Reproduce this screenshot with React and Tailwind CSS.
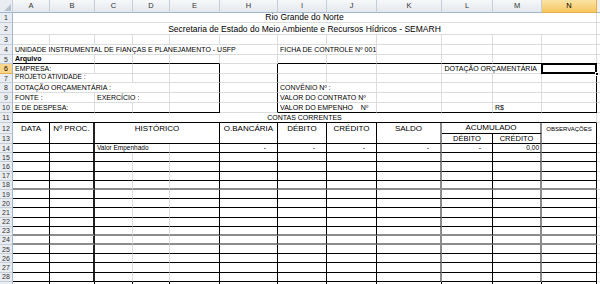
import React from "react";

// larguras das colunas (px) como na planilha reduzida
const W = {
  A: "w-[37px]", B: "w-[45px]", C: "w-[38px]", D: "w-[37px]", E: "w-[50px]",
  H: "w-[58px]", I: "w-[49px]", J: "w-[50px]", K: "w-[65px]", L: "w-[51px]",
  M: "w-[49px]", N: "w-[55px]",
};
const COLS = ["A", "B", "C", "D", "E", "H", "I", "J", "K", "L", "M", "N"];

// bordas: grade clara, preta e cinza grossa
const gr = "border-r border-r-[#dadcdd]";
const gb = "border-b border-b-[#dadcdd]";
const kr = "border-r border-r-black";
const kb = "border-b border-b-black";
const xr = "border-r-2 border-r-[#8c8c8c]";
const xb = "border-b-2 border-b-[#8c8c8c]";

function Cell({ w, r = gr, b = gb, className = "", children }) {
  return (
    <div className={`${w} ${r} ${b} shrink-0 h-full flex items-end overflow-hidden whitespace-nowrap ${className}`}>
      {children}
    </div>
  );
}

function RowHead({ n, sel }) {
  return (
    <div
      className={[
        "w-[13px] shrink-0 h-full flex items-center justify-center text-[7px] border-r border-r-[#9eb6ce] border-b",
        sel ? "bg-[#f8d58a] border-b-[#e8ae4c] text-black" : "bg-[#e9edf2] border-b-[#c5cdd8] text-[#333]",
      ].join(" ")}
    >
      {n}
    </div>
  );
}

function Row({ n, h, sel, children }) {
  return (
    <div className={`flex ${h}`}>
      <RowHead n={n} sel={sel} />
      {children}
      <div className="flex-1 h-full border-b border-b-[#dadcdd]" />
    </div>
  );
}

function ColHeader() {
  return (
    <div className="flex h-[13px]">
      <div className="w-[13px] shrink-0 h-full relative bg-[#e9edf2] border-r border-r-[#c5cdd8] border-b border-b-[#9eb6ce]">
        <div className="absolute right-[1px] bottom-[1px] w-0 h-0 border-l-[7px] border-l-transparent border-b-[7px] border-b-[#b8c0ca]" />
      </div>
      {COLS.map((c) => (
        <div
          key={c}
          className={[
            W[c],
            "shrink-0 h-full flex items-center justify-center text-[7.5px] border-r border-b",
            c === "N"
              ? "bg-linear-to-b from-[#fbe3a4] to-[#f6c75e] border-r-[#e9ad4c] border-b-[#e9ad4c] text-black"
              : "bg-linear-to-b from-[#f6f8fa] to-[#e4e8ed] border-r-[#c5cdd8] border-b-[#9eb6ce] text-[#333]",
          ].join(" ")}
        >
          {c}
        </div>
      ))}
      <div className="flex-1 h-full bg-[#eceff3] border-b border-b-[#9eb6ce]" />
    </div>
  );
}

const t7 = "text-[7px] pl-[2px] pb-[1px]";

// linhas 14..28 com algumas linhas horizontais mais grossas/cinzentas
const DATA_ROWS = [14, 15, 16, 17, 18, 19, 20, 21, 22, 23, 24, 25, 26, 27, 28];
const THICK = [18, 23, 24];

function DataRow({ n }) {
  const b = THICK.includes(n) ? xb : kb;
  const first = n === 14;
  const dash = (w, r) => (
    <Cell w={w} r={r} b={b} className="justify-end pr-[11px] text-[7px] pb-[1px]">
      {first ? "-" : ""}
    </Cell>
  );
  return (
    <Row n={n} h="h-[9.2px]">
      <Cell w={W.A} r={kr} b={b} />
      <Cell w={W.B} r="border-r-2 border-r-[#222]" b={b} />
      {first ? (
        <Cell w="w-[75px]" b={b} className="text-[6.5px] pl-[2px] pb-[1px]">Valor Empenhado</Cell>
      ) : (
        <>
          <Cell w={W.C} b={b} />
          <Cell w={W.D} b={b} />
        </>
      )}
      <Cell w={W.E} r={kr} b={b} />
      {dash(W.H, kr)}
      {dash(W.I, kr)}
      {dash(W.J, kr)}
      {dash(W.K, xr)}
      {dash(W.L, kr)}
      <Cell w={W.M} r={xr} b={b} className="justify-end pr-[1px] text-[6.5px] pb-[1px]">
        {first ? "0,00" : ""}
      </Cell>
      <Cell w={W.N} r={kr} b={b} />
    </Row>
  );
}

export default function App() {
  return (
    <div className="w-[600px] h-[284px] overflow-hidden bg-white text-black leading-none font-[family-name:Liberation_Sans,Arial,sans-serif]">
      <ColHeader />

      <Row n={1} h="h-[10px]">
        <Cell w="w-[584px]" className="justify-center text-[8.5px] pb-[1px]">Rio Grande do Norte</Cell>
      </Row>
      <Row n={2} h="h-[12px]">
        <Cell w="w-[584px]" className="justify-center text-[8.5px] pb-[1px]">
          Secretaria de Estado do Meio Ambiente e Recursos Hídricos - SEMARH
        </Cell>
      </Row>
      <Row n={3} h="h-[10px]">
        {COLS.map((c) => <Cell key={c} w={W[c]} />)}
      </Row>
      <Row n={4} h="h-[10px]">
        <Cell w="w-[265px]" className={t7}>UNIDADE INSTRUMENTAL DE FIANÇAS E PLANEJAMENTO - USFP</Cell>
        <Cell w="w-[99px]" className={t7}>FICHA DE CONTROLE Nº 001</Cell>
        <Cell w={W.K} />
        <Cell w={W.L} />
        <Cell w={W.M} />
        <Cell w={W.N} />
      </Row>
      <Row n={5} h="h-[9px]">
        <Cell w="w-[82px]" b={kb} className={`${t7} font-bold`}>Arquivo</Cell>
        <Cell w={W.C} b={kb} />
        <Cell w={W.D} b={kb} />
        <Cell w={W.E} b={kb} />
        <Cell w={W.H} />
        {["I", "J", "K", "L", "M", "N"].map((c) => <Cell key={c} w={W[c]} b={kb} />)}
      </Row>
      <Row n={6} h="h-[10px]" sel>
        <Cell w="w-[82px]" className={t7}>EMPRESA:</Cell>
        <Cell w={W.C} />
        <Cell w={W.D} />
        <Cell w={W.E} r={kr} />
        <Cell w={W.H} r={kr} />
        <Cell w={W.I} />
        <Cell w={W.J} />
        <Cell w={W.K} />
        <Cell w="w-[100px]" className="justify-end pr-[4px] text-[7px] pb-[1px]">DOTAÇÃO ORÇAMENTÁRIA</Cell>
        <div className={`${W.N} ${kr} ${gb} shrink-0 h-full relative`}>
          <div className="absolute -left-px -top-px -right-px -bottom-px border-2 border-black" />
          <div className="absolute -right-[3px] -bottom-[3px] w-[4px] h-[4px] bg-black border border-white" />
        </div>
      </Row>
      <Row n={7} h="h-[9px]">
        <Cell w="w-[120px]" className="text-[6.6px] pl-[2px] pb-[1px]">PROJETO ATIVIDADE :</Cell>
        <Cell w={W.D} />
        <Cell w={W.E} r={kr} />
        <Cell w={W.H} r={kr} />
        {["I", "J", "K", "L", "M"].map((c) => <Cell key={c} w={W[c]} />)}
        <Cell w={W.N} r={kr} />
      </Row>
      <Row n={8} h="h-[10px]">
        <Cell w="w-[157px]" className={t7}>DOTAÇÃO ORÇAMENTÁRIA :</Cell>
        <Cell w={W.E} r={kr} />
        <Cell w={W.H} r={kr} />
        <Cell w="w-[99px]" className={t7}>CONVÊNIO Nº :</Cell>
        <Cell w={W.K} />
        <Cell w={W.L} />
        <Cell w={W.M} />
        <Cell w={W.N} r={kr} />
      </Row>
      <Row n={9} h="h-[10px]">
        <Cell w="w-[82px]" className={t7}>FONTE :</Cell>
        <Cell w="w-[75px]" className={t7}>EXERCÍCIO :</Cell>
        <Cell w={W.E} r={kr} />
        <Cell w={W.H} r={kr} />
        <Cell w="w-[99px]" className={t7}>VALOR DO CONTRATO Nº</Cell>
        <Cell w={W.K} />
        <Cell w={W.L} />
        <Cell w={W.M} />
        <Cell w={W.N} r={kr} />
      </Row>
      <Row n={10} h="h-[10px]">
        <Cell w="w-[82px]" b={kb} className={t7}>E DE DESPESA:</Cell>
        <Cell w={W.C} b={kb} />
        <Cell w={W.D} b={kb} />
        <Cell w={W.E} r={kr} b={kb} />
        <Cell w={W.H} r={kr} />
        <Cell w="w-[99px]" b={kb} className={`${t7} whitespace-pre`}>VALOR DO EMPENHO    Nº</Cell>
        <Cell w={W.K} b={kb} />
        <Cell w={W.L} b={kb} />
        <Cell w={W.M} b={kb} className={t7}>R$</Cell>
        <Cell w={W.N} r={kr} b={kb} />
      </Row>
      <Row n={11} h="h-[10px]">
        <Cell w="w-[584px]" b={kb} className="justify-center text-[7px] pb-[1px]">CONTAS CORRENTES</Cell>
      </Row>

      {/* cabeçalho da tabela, linhas 12 e 13 mescladas */}
      <div className="flex h-[21px]">
        <div className="w-[13px] shrink-0 flex flex-col">
          <div className="h-[11px]"><RowHead n={12} /></div>
          <div className="h-[10px]"><RowHead n={13} /></div>
        </div>
        <Head w={W.A} r={kr}>DATA</Head>
        <Head w={W.B} r="border-r-2 border-r-[#222]">Nº PROC.</Head>
        <Head w="w-[125px]" r={kr}>HISTÓRICO</Head>
        <Head w={W.H} r={kr}>O.BANCÁRIA</Head>
        <Head w={W.I} r={kr}>DÉBITO</Head>
        <Head w={W.J} r={kr}>CRÉDITO</Head>
        <Head w={W.K} r={xr}>SALDO</Head>
        <div className="w-[100px] shrink-0 flex flex-col">
          <div className={`h-[11px] ${xr} ${kb} flex items-center justify-center text-[8px]`}>ACUMULADO</div>
          <div className="h-[10px] flex">
            <div className={`${W.L} ${kr} ${kb} shrink-0 flex items-center justify-center text-[7.5px]`}>DÉBITO</div>
            <div className={`${W.M} ${xr} ${kb} shrink-0 flex items-center justify-center text-[7.5px]`}>CRÉDITO</div>
          </div>
        </div>
        <Head w={W.N} r={kr} small>OBSERVAÇÕES</Head>
        <div className="flex-1 h-full border-b border-b-[#dadcdd]" />
      </div>

      {DATA_ROWS.map((n) => <DataRow key={n} n={n} />)}
      <Row n="" h="h-[9px]">
        {COLS.map((c) => <Cell key={c} w={W[c]} r={kr} />)}
      </Row>
    </div>
  );
}

function Head({ w, r, small, children }) {
  return (
    <div className={`${w} ${r} ${kb} shrink-0 h-full flex flex-col`}>
      <div className={`h-[11px] flex items-center justify-center whitespace-nowrap ${small ? "text-[6px]" : "text-[8px]"}`}>
        {children}
      </div>
    </div>
  );
}
